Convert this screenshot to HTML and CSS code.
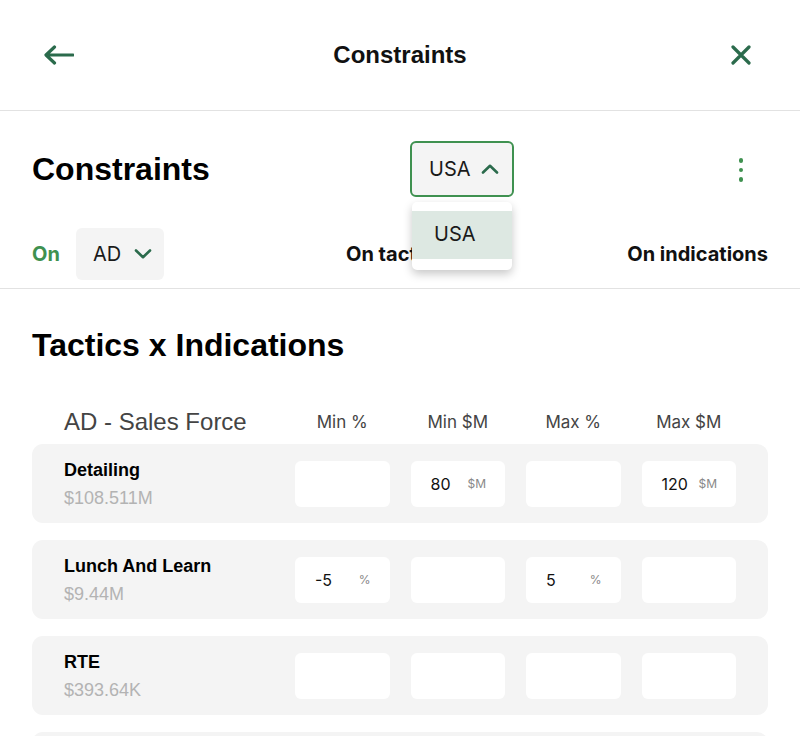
FILE: index.html
```html
<!DOCTYPE html>
<html lang="en">
<head>
<meta charset="utf-8">
<title>Constraints</title>
<link rel="stylesheet" href="styles.css">
</head>
<body>
<header class="topbar">
  <button class="icon-btn back" aria-label="Back">
    <svg width="30" height="20" viewBox="0 0 30 20"><path d="M29 10H3M10.5 2L2 10l8.5 8" fill="none" stroke="#2b6b4c" stroke-width="3.2" stroke-linecap="round" stroke-linejoin="round"/></svg>
  </button>
  <div class="topbar-title">Constraints</div>
  <button class="icon-btn close" aria-label="Close">
    <svg width="20" height="20" viewBox="0 0 20 20"><path d="M2 2l16 16M18 2L2 18" fill="none" stroke="#2b6b4c" stroke-width="3.2" stroke-linecap="round"/></svg>
  </button>
</header>

<section class="controls">
  <div class="title-row">
    <h1 class="page-title">Constraints</h1>
    <div class="select-wrap">
      <div class="select select-open">
        <span>USA</span>
        <svg width="18" height="10" viewBox="0 0 18 10"><path d="M2 8.5L9 1.8l7 6.7" fill="none" stroke="#2b6b4c" stroke-width="2.6" stroke-linecap="round" stroke-linejoin="round"/></svg>
      </div>
      <div class="menu">
        <div class="menu-item">USA</div>
      </div>
    </div>
    <div class="kebab" aria-label="More">
      <span></span><span></span><span></span>
    </div>
  </div>
  <div class="tab-row">
    <div class="tab-group">
      <span class="tab-on">On</span>
      <div class="select select-ad">
        <span>AD</span>
        <svg width="18" height="10" viewBox="0 0 18 10"><path d="M2 1.5L9 8.2l7-6.7" fill="none" stroke="#2b6b4c" stroke-width="2.6" stroke-linecap="round" stroke-linejoin="round"/></svg>
      </div>
    </div>
    <span class="tab">On tactics</span>
    <span class="tab">On indications</span>
  </div>
</section>

<main class="content">
  <h2 class="section-title">Tactics x Indications</h2>
  <div class="grid-row table-head">
    <div class="group-name">AD - Sales Force</div>
    <div class="col-label">Min %</div>
    <div class="col-label">Min $M</div>
    <div class="col-label">Max %</div>
    <div class="col-label">Max $M</div>
  </div>

  <div class="grid-row card">
    <div class="tactic">
      <div class="tactic-name">Detailing</div>
      <div class="tactic-value">$108.511M</div>
    </div>
    <div class="field"></div>
    <div class="field"><span class="val">80</span><span class="unit">$M</span></div>
    <div class="field"></div>
    <div class="field"><span class="val">120</span><span class="unit">$M</span></div>
  </div>

  <div class="grid-row card">
    <div class="tactic">
      <div class="tactic-name">Lunch And Learn</div>
      <div class="tactic-value">$9.44M</div>
    </div>
    <div class="field"><span class="val">-5</span><span class="unit">%</span></div>
    <div class="field"></div>
    <div class="field"><span class="val">5</span><span class="unit">%</span></div>
    <div class="field"></div>
  </div>

  <div class="grid-row card">
    <div class="tactic">
      <div class="tactic-name">RTE</div>
      <div class="tactic-value">$393.64K</div>
    </div>
    <div class="field"></div>
    <div class="field"></div>
    <div class="field"></div>
    <div class="field"></div>
  </div>

  <div class="grid-row card">
    <div class="tactic"></div>
    <div class="field"></div>
    <div class="field"></div>
    <div class="field"></div>
    <div class="field"></div>
  </div>
</main>
</body>
</html>
```

FILE: styles.css
```css
* { box-sizing: border-box; }

html, body {
  margin: 0;
  padding: 0;
  background: #ffffff;
}

body {
  font-family: "Liberation Sans", Arial, sans-serif;
  color: #111;
  overflow: hidden;
}

.topbar {
  height: 111px;
  display: flex;
  align-items: center;
  justify-content: space-between;
  padding: 0 44px 1px 44px;
  border-bottom: 1px solid #e2e2e2;
}

.icon-btn {
  border: 0;
  background: none;
  padding: 0;
  width: 30px;
  display: flex;
  align-items: center;
  justify-content: center;
  cursor: pointer;
}

.back {
  justify-content: flex-start;
}

.topbar-title {
  font-size: 24px;
  font-weight: 700;
  color: #111;
}

.controls {
  border-bottom: 1px solid #e2e2e2;
  padding: 30px 32px 8px;
}

.title-row {
  display: flex;
  align-items: center;
  height: 56px;
}

.page-title {
  margin: 0;
  flex: 0 0 378px;
  font-size: 32px;
  font-weight: 700;
  line-height: 38px;
  color: #000;
}

.select-wrap {
  position: relative;
}

.select {
  display: flex;
  align-items: center;
  justify-content: space-between;
  background: #f4f4f4;
  border-radius: 6px;
  font-family: Inter, "Liberation Sans", sans-serif;
  font-size: 20px;
  color: #1a1a1a;
}

.select-open {
  width: 104px;
  height: 56px;
  border: 2px solid #3f9150;
  padding: 0 13px 0 17px;
}

.select-ad {
  width: 88px;
  height: 52px;
  padding: 0 12px 0 17px;
}

.menu {
  position: absolute;
  top: 61px;
  left: 2px;
  width: 100px;
  background: #fff;
  border-radius: 5px;
  padding: 9px 0 11px;
  box-shadow: 0 4px 10px rgba(0, 0, 0, 0.22);
  z-index: 5;
}

.menu-item {
  height: 48px;
  line-height: 46px;
  background: #dde8e2;
  padding-left: 22px;
  font-family: Inter, "Liberation Sans", sans-serif;
  font-size: 20px;
  color: #1a1a1a;
}

.kebab {
  margin-left: auto;
  margin-right: 25px;
  display: flex;
  flex-direction: column;
  align-items: center;
  gap: 5px;
  padding-top: 2px;
}

.kebab span {
  width: 4.5px;
  height: 4.5px;
  border-radius: 50%;
  background: #3f9150;
}

.tab-row {
  margin-top: 31px;
  display: flex;
  align-items: center;
  justify-content: space-between;
  height: 52px;
}

.tab-group {
  display: flex;
  align-items: center;
  gap: 16px;
}

.tab-on {
  font-family: Inter, "Liberation Sans", sans-serif;
  font-size: 20px;
  font-weight: 700;
  color: #3f9150;
}

.tab {
  font-family: Inter, "Liberation Sans", sans-serif;
  font-size: 20px;
  font-weight: 700;
  color: #111;
}

.content {
  padding: 37px 32px 0;
}

.section-title {
  margin: 0;
  font-size: 32px;
  font-weight: 700;
  line-height: 38px;
  color: #000;
}

.grid-row {
  display: grid;
  grid-template-columns: 210px repeat(4, 1fr);
  column-gap: 21px;
  align-items: center;
}

.table-head {
  margin-top: 44px;
  margin-bottom: 12px;
  height: 24px;
  padding: 0 32px;
}

.group-name {
  font-size: 24px;
  color: #444;
  white-space: nowrap;
}

.col-label {
  text-align: center;
  font-family: Inter, "Liberation Sans", sans-serif;
  font-size: 17px;
  color: #444;
  white-space: nowrap;
}

.card {
  height: 79px;
  background: #f4f4f4;
  border-radius: 11px;
  padding: 0 32px;
  margin-bottom: 17px;
}

.tactic-name {
  font-size: 18px;
  font-weight: 700;
  line-height: 28px;
  color: #000;
}

.tactic-value {
  font-size: 18px;
  line-height: 28px;
  color: #b3b3b3;
}

.field {
  height: 46px;
  background: #fff;
  border-radius: 6px;
  display: flex;
  align-items: center;
  justify-content: space-between;
  padding: 0 19px 0 20px;
  font-family: Inter, "Liberation Sans", sans-serif;
}

.val {
  font-size: 16px;
  color: #111;
}

.unit {
  font-size: 12px;
  color: #888;
}
```
